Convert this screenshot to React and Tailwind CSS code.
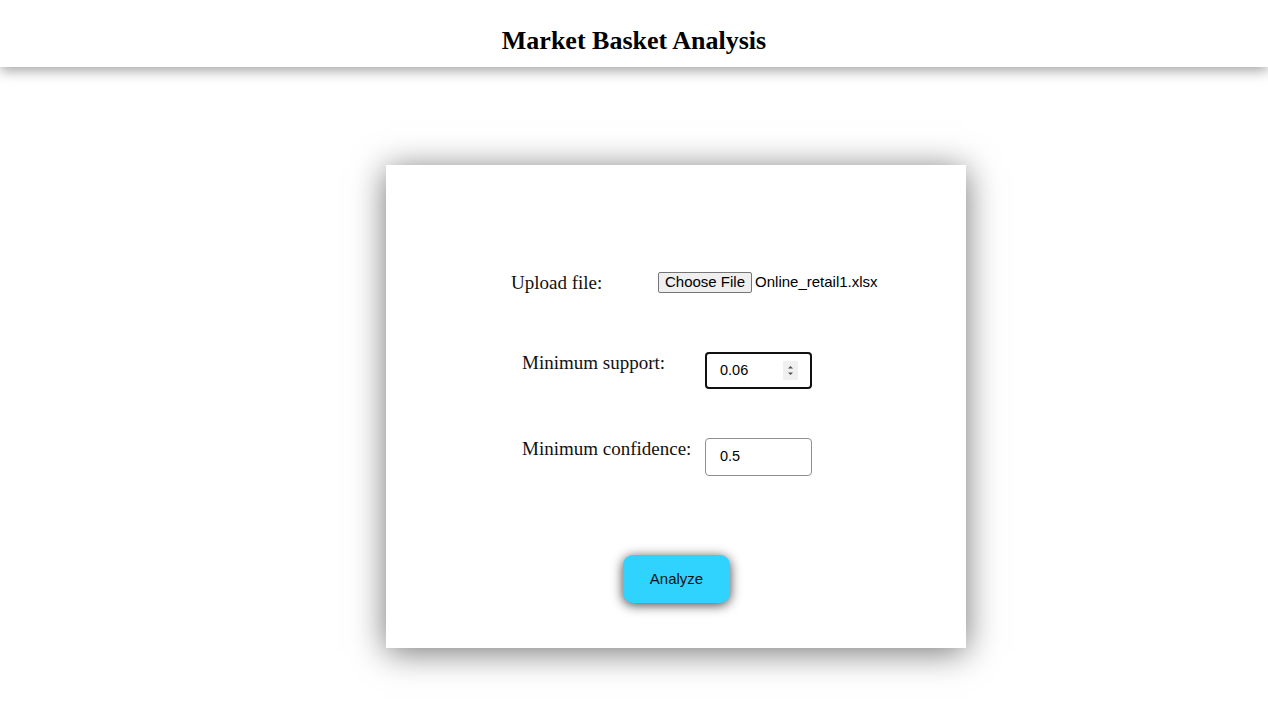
import React from 'react';

// Market Basket Analysis form page
export default function App() {
  return (
    <div className="min-h-[714px] bg-white" style={{ fontFamily: '"Liberation Serif", serif' }}>
      {/* Header */}
      <header className="h-[67px] flex items-center justify-center bg-white shadow-[0_4px_12px_rgba(0,0,0,0.35)] relative z-10">
        <h1 className="text-[26px] font-bold text-black leading-none pt-[14px]">Market Basket Analysis</h1>
      </header>

      {/* Card */}
      <div className="pt-[98px]">
        <div className="ml-[386px] w-[580px] h-[483px] bg-white shadow-[0_4px_32px_rgba(0,0,0,0.55)] flex flex-col pt-[107px]">
          {/* Upload row */}
          <div className="flex items-center h-[21px]">
            <span className="ml-[125px] w-[147px] text-[19px] text-[#111] leading-none">Upload file:</span>
            <div className="flex items-center" style={{ fontFamily: '"Liberation Sans", Arial, sans-serif' }}>
              <span className="h-[21px] px-[6px] flex items-center text-[15px] text-black bg-[#efefef] border border-[#767676] rounded-[2px]">
                Choose File
              </span>
              <span className="ml-[3px] text-[15px] text-black">Online_retail1.xlsx</span>
            </div>
          </div>

          {/* Minimum support */}
          <div className="flex items-start mt-[59px]">
            <span className="ml-[136px] w-[183px] text-[19px] text-[#111] leading-[22px]">Minimum support:</span>
            <div
              className="w-[107px] h-[37px] border-2 border-[#101010] rounded-[4px] flex items-center pl-[13px] pr-[13px] justify-between"
              style={{ fontFamily: '"Liberation Sans", Arial, sans-serif' }}
            >
              <span className="text-[14.5px] text-black">0.06</span>
              <svg width="15" height="19" viewBox="0 0 15 19" className="mr-[-1px]">
                <rect width="15" height="19" fill="#f0f0f0" />
                <path d="M5 7.5 L7.5 5 L10 7.5 Z" fill="#505050" />
                <path d="M5 11.5 L7.5 14 L10 11.5 Z" fill="#505050" />
              </svg>
            </div>
          </div>

          {/* Minimum confidence */}
          <div className="flex items-start mt-[49px]">
            <span className="ml-[136px] w-[183px] text-[19px] text-[#111] leading-[22px]">Minimum confidence:</span>
            <div
              className="w-[107px] h-[38px] border border-[#8f8f8f] rounded-[4px] flex items-center pl-[14px]"
              style={{ fontFamily: '"Liberation Sans", Arial, sans-serif' }}
            >
              <span className="text-[14.5px] text-black">0.5</span>
            </div>
          </div>

          {/* Analyze */}
          <div className="mt-[79px] ml-[237px]">
            <button
              className="w-[107px] h-[48px] rounded-[10px] bg-[#2fd3fe] text-[15px] text-[#111] shadow-[0_2px_12px_rgba(0,0,0,0.75)]"
              style={{ fontFamily: '"Liberation Sans", Arial, sans-serif' }}
            >
              Analyze
            </button>
          </div>
        </div>
      </div>
    </div>
  );
}
